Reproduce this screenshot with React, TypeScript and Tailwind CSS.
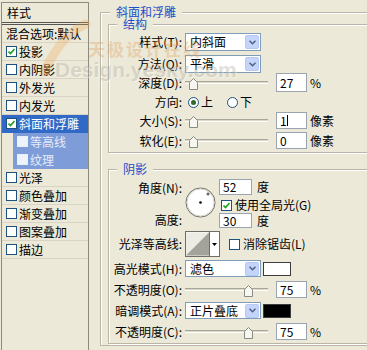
import React from 'react';

interface LayerItem {
  name: string;
  checked?: boolean;
  selected?: boolean;
  sub?: boolean;
}

const layers: LayerItem[] = [
  { name: '投影', checked: true },
  { name: '内阴影' },
  { name: '外发光' },
  { name: '内发光' },
  { name: '斜面和浮雕', checked: true, selected: true },
  { name: '等高线', sub: true },
  { name: '纹理', sub: true },
  { name: '光泽' },
  { name: '颜色叠加' },
  { name: '渐变叠加' },
  { name: '图案叠加' },
  { name: '描边' },
];

function CheckBox({ checked, light }: { checked?: boolean; light?: boolean }) {
  return (
    <span
      className={`w-[11px] h-[11px] shrink-0 border flex items-center justify-center ${
        light ? 'border-[#e8eefa] bg-[#eef2fb]' : 'border-[#1c5180] bg-white'
      }`}
    >
      {checked && (
        <svg width="7" height="7" viewBox="0 0 7 7">
          <path d="M0.5 3.5 L2.5 5.5 L6.5 1" fill="none" stroke="#21a121" strokeWidth="1.6" />
        </svg>
      )}
    </span>
  );
}

function Radio({ on }: { on?: boolean }) {
  return (
    <span className="w-[11px] h-[11px] rounded-full border border-[#1c5180] bg-white flex items-center justify-center">
      {on && <span className="w-[5px] h-[5px] rounded-full bg-[#2d6a2d]" />}
    </span>
  );
}

function Label({ text }: { text: string }) {
  return <span className="w-[74px] shrink-0 text-right pr-[1px]">{text}</span>;
}

function Dropdown({ value }: { value: string }) {
  return (
    <div className="ml-[2px] w-[76px] h-full border border-[#7f9db9] bg-white flex items-center">
      <span className="flex-1 pl-[4px] leading-none">{value}</span>
      <span className="w-[14px] h-[14px] mr-[1px] rounded-[2px] bg-[#c4d4fb] border border-[#b6c8f4] flex items-center justify-center">
        <svg width="7" height="5" viewBox="0 0 7 5">
          <path d="M0.5 0.8 L3.5 3.8 L6.5 0.8" fill="none" stroke="#4d6185" strokeWidth="1.5" />
        </svg>
      </span>
    </div>
  );
}

function Slider({ pos }: { pos: number }) {
  return (
    <div className="ml-[2px] w-[83px] h-full relative flex items-center">
      <div className="w-full h-[3px] border-t border-[#a7a69a] border-b border-b-white bg-[#dcd9c8]" />
      <svg
        width="9"
        height="12"
        viewBox="0 0 9 12"
        className="absolute"
        style={{ left: pos, top: '50%', marginTop: -5 }}
      >
        <path d="M0.5 11.5 L0.5 4.5 L4.5 0.5 L8.5 4.5 L8.5 11.5 Z" fill="#f7f7f2" stroke="#8a8a80" />
      </svg>
    </div>
  );
}

function NumBox({ value, caret }: { value: string; caret?: boolean }) {
  return (
    <div className="ml-[8px] w-[31px] h-full border border-[#9aa3b0] bg-white flex items-center pl-[3px] leading-none">
      {value}
      {caret && <span className="w-px h-[11px] bg-black" />}
    </div>
  );
}

function Swatch({ color }: { color: string }) {
  return <div className={`ml-[2px] w-[28px] h-[14px] border border-[#3c3c3c] ${color}`} />;
}

export default function App() {
  return (
    <div className="relative w-[367px] h-[350px] overflow-hidden bg-[#ece9d8] flex text-[12px] text-black font-['Noto_Sans_CJK_SC',sans-serif]">
      {/* Left Column - layer style list */}
      <div className="ml-[1px] mt-[2px] w-[88px] h-[350px] border border-[#8d8b80] shrink-0">
        <div className="h-[22px] flex items-center px-[5px] border-b-[3px] border-double border-[#555]">样式</div>
        <div className="h-[18px] flex items-center px-[4px] border-b border-[#d8d5c6] whitespace-nowrap">
          混合选项:默认
        </div>
        {layers.map((item, index) => (
          <div
            key={index}
            className={`h-[18px] flex items-center gap-[2px] border-b whitespace-nowrap ${
              item.selected
                ? 'bg-[#3169c6] text-white border-[#3169c6] pl-[4px]'
                : item.sub
                ? 'ml-[11px] bg-[#7d9cd8] text-[#e6ecf8] border-[#7d9cd8] pl-[4px]'
                : 'border-[#d8d5c6] pl-[4px]'
            }`}
          >
            <CheckBox checked={item.checked} light={item.sub} />
            <span>{item.name}</span>
          </div>
        ))}
      </div>

      {/* Right Column - bevel and emboss options */}
      <div className="ml-[6px] shrink-0">
        <fieldset className="ml-[5px] mt-[5px] w-[300px] h-[341px] border border-[#b9b6a8] shadow-[inset_1px_1px_0_#ffffff]">
          <legend className="ml-[9px] px-[6px] leading-[14px] text-[#1a50c8] bg-[#ece9d8]">斜面和浮雕</legend>

          {/* Structure */}
          <fieldset className="-mt-[2px] ml-[7px] w-[300px] h-[136px] border border-[#b9b6a8] shadow-[inset_1px_1px_0_#ffffff,1px_1px_0_#ffffff]">
            <legend className="ml-[8px] px-[6px] leading-[14px] text-[#1a50c8] bg-[#ece9d8]">结构</legend>
            <div className="mt-[2px] h-[18px] flex items-center">
              <Label text="样式(T):" />
              <Dropdown value="内斜面" />
            </div>
            <div className="mt-[4px] h-[18px] flex items-center">
              <Label text="方法(Q):" />
              <Dropdown value="平滑" />
            </div>
            <div className="h-[19px] flex items-center">
              <Label text="深度(D):" />
              <Slider pos={4} />
              <NumBox value="27" />
              <span className="ml-[3px]">%</span>
            </div>
            <div className="mt-[3px] h-[14px] flex items-center">
              <Label text="方向:" />
              <span className="ml-[5px]">
                <Radio on />
              </span>
              <span className="ml-[2px]">上</span>
              <span className="ml-[14px]">
                <Radio />
              </span>
              <span className="ml-[2px]">下</span>
            </div>
            <div className="mt-[3px] h-[17px] flex items-center">
              <Label text="大小(S):" />
              <Slider pos={4} />
              <NumBox value="1" caret />
              <span className="ml-[3px]">像素</span>
            </div>
            <div className="mt-[3px] h-[17px] flex items-center">
              <Label text="软化(E):" />
              <Slider pos={4} />
              <NumBox value="0" />
              <span className="ml-[3px]">像素</span>
            </div>
          </fieldset>

          {/* Shading */}
          <fieldset className="mt-[9px] ml-[7px] w-[300px] h-[182px] border border-[#b9b6a8] shadow-[inset_1px_1px_0_#ffffff,1px_1px_0_#ffffff]">
            <legend className="ml-[8px] px-[6px] leading-[14px] text-[#1a50c8] bg-[#ece9d8]">阴影</legend>
            <div className="flex h-[52px]">
              <div className="w-[74px] shrink-0 flex flex-col items-end pr-[1px]">
                <span className="mt-[5px] leading-[14px]">角度(N):</span>
                <span className="mt-[18px] leading-[14px]">高度:</span>
              </div>
              <svg width="31" height="31" viewBox="0 0 31 31" className="ml-[2px] mt-[11px]">
                <circle cx="15.5" cy="15.5" r="14.5" fill="#ffffff" stroke="#6b6b66" />
                <circle cx="15.5" cy="15.5" r="13.5" fill="none" stroke="#d6d3c6" />
                <circle cx="15.5" cy="15.5" r="1.3" fill="#000" />
                <path d="M21.5 7 h3 M23 5.5 v3" stroke="#333" strokeWidth="1" />
              </svg>
              <div className="ml-[3px] flex flex-col">
                <div className="mt-[3px] h-[16px] flex items-center">
                  <div className="w-[33px] h-full border border-[#9aa3b0] bg-white pl-[3px] leading-[14px]">52</div>
                  <span className="ml-[5px]">度</span>
                </div>
                <div className="mt-[4px] h-[12px] flex items-center ml-[2px]">
                  <CheckBox checked />
                  <span className="ml-[3px]">使用全局光(G)</span>
                </div>
                <div className="mt-[2px] h-[15px] flex items-center">
                  <div className="w-[33px] h-full border border-[#9aa3b0] bg-white pl-[3px] leading-[13px]">30</div>
                  <span className="ml-[5px]">度</span>
                </div>
              </div>
            </div>
            <div className="mt-[3px] h-[26px] flex items-center">
              <Label text="光泽等高线:" />
              <div className="ml-[2px] w-[35px] h-full border border-[#6f6f6a] bg-white flex">
                <svg width="24" height="24" viewBox="0 0 24 24" className="border-r border-[#6f6f6a]">
                  <rect x="0" y="0" width="24" height="24" fill="#ecebe4" />
                  <path d="M0 24 L24 0 L24 24 Z" fill="#a3a39b" />
                </svg>
                <div className="flex-1 flex items-center justify-center">
                  <svg width="5" height="3" viewBox="0 0 5 3">
                    <path d="M0 0 H5 L2.5 3 Z" fill="#000" />
                  </svg>
                </div>
              </div>
              <span className="ml-[9px]">
                <CheckBox />
              </span>
              <span className="ml-[3px]">消除锯齿(L)</span>
            </div>
            <div className="mt-[3px] h-[17px] flex items-center">
              <Label text="高光模式(H):" />
              <Dropdown value="滤色" />
              <Swatch color="bg-white" />
            </div>
            <div className="mt-[4px] h-[17px] flex items-center">
              <Label text="不透明度(O):" />
              <Slider pos={59} />
              <NumBox value="75" />
              <span className="ml-[3px]">%</span>
            </div>
            <div className="mt-[4px] h-[17px] flex items-center">
              <Label text="暗调模式(A):" />
              <Dropdown value="正片叠底" />
              <Swatch color="bg-black" />
            </div>
            <div className="mt-[4px] h-[17px] flex items-center">
              <Label text="不透明度(C):" />
              <Slider pos={59} />
              <NumBox value="75" />
              <span className="ml-[3px]">%</span>
            </div>
          </fieldset>
        </fieldset>
      </div>

      {/* Watermark overlay */}
      <svg width="120" height="90" viewBox="0 0 120 90" className="absolute left-0 top-0 pointer-events-none">
        <path d="M86 24 Q62 34 44 72" fill="none" stroke="#f0a050" strokeWidth="9" strokeLinecap="round" opacity="0.28" />
      </svg>
      <div className="absolute left-[88px] top-[36px] text-[17px] font-bold tracking-[2px] text-[#e0a060] opacity-35 pointer-events-none whitespace-nowrap">
        天极设计在线
      </div>
      <div className="absolute left-[55px] top-[54px] text-[21px] font-bold font-['Liberation_Sans',sans-serif] text-[#b8b4a8] opacity-40 pointer-events-none whitespace-nowrap [text-shadow:1px_1px_0_#ffffff]">
        Design.yesky.com
      </div>
    </div>
  );
}
